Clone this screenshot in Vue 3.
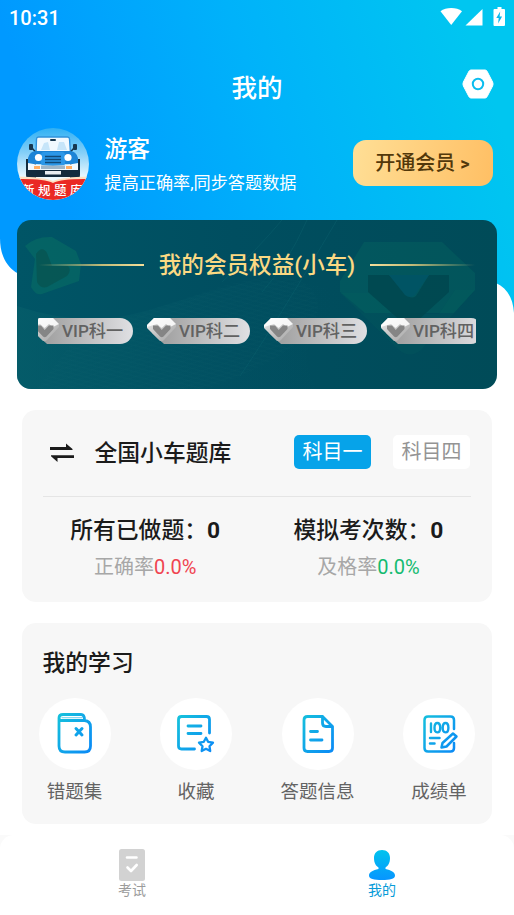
<script setup>
const chips = ['VIP科一', 'VIP科二', 'VIP科三', 'VIP科四']
const stats = [
  { title: '所有已做题：', count: 0, label: '正确率', value: '0.0%', tone: 'red' },
  { title: '模拟考次数：', count: 0, label: '及格率', value: '0.0%', tone: 'green' },
]
const tools = [
  { id: 'wrong', label: '错题集' },
  { id: 'fav', label: '收藏' },
  { id: 'info', label: '答题信息' },
  { id: 'score', label: '成绩单' },
]
</script>

<template>
  <div class="page" lang="zh-CN">
    <svg class="hero-bg" viewBox="0 0 514 320" aria-hidden="true">
      <defs>
        <linearGradient id="hero" gradientUnits="userSpaceOnUse" x1="60" y1="200" x2="480" y2="60">
          <stop offset="0" stop-color="#0099ff" />
          <stop offset=".5" stop-color="#00b2fa" />
          <stop offset="1" stop-color="#00c6f0" />
        </linearGradient>
      </defs>
      <path d="M0 0H514V313C513 298 507 288 496 283L470 278H38C15 278 0 264 0 238Z" fill="url(#hero)" />
    </svg>

    <header class="status">
      <span class="clock">10:31</span>
      <svg class="status-icons" viewBox="0 0 66 20">
        <path d="M.5 4.200C6-.2 16.500-.2 22 4.200L11.200 18z" fill="#fff" />
        <path d="M42.500 2V18.500H25.500z" fill="#fff" />
        <path d="M57.500 0h4v2H64q1 0 1 1v15q0 1-1 1H54.500q-1 0-1-1V3q0-1 1-1h3z" fill="#fff" />
        <path d="M60.200 4.500 56.300 11h2.400l-.6 5.500 4-7h-2.500z" fill="#08b8ee" />
      </svg>
    </header>

    <div class="titlebar">
      <h1>我的</h1>
      <svg class="settings" viewBox="0 0 32 30">
        <path d="M9 1H23Q24.200 1 25 2.200L30.600 13Q31.500 15 30.600 17L25 27.800Q24.200 29 23 29H9Q7.800 29 7 27.800L1.400 17Q.5 15 1.400 13L7 2.200Q7.800 1 9 1Z" fill="#fff" stroke="#fff" />
        <circle cx="16" cy="15" r="5.200" fill="none" stroke="#0bbdef" stroke-width="2" />
      </svg>
    </div>

    <section class="profile">
      <svg class="avatar" viewBox="0 0 72 72">
        <defs>
          <clipPath id="round"><circle cx="36" cy="36" r="36" /></clipPath>
          <linearGradient id="sky" x1="0" y1="0" x2="0" y2="1">
            <stop offset="0" stop-color="#2fb0f4" /><stop offset=".35" stop-color="#86d0f8" /><stop offset=".7" stop-color="#f0fbff" />
          </linearGradient>
        </defs>
        <g clip-path="url(#round)">
          <rect width="72" height="72" fill="url(#sky)" />
          <path d="M19 25 19.500 11Q19.700 9 21.500 9H50.500Q52.300 9 52.500 11L53.500 25z" fill="#f0f9ff" stroke="#2f92dc" stroke-width="1.400" />
          <path d="M24 22 27 15 31 14 33 22zM40 22 42 14 47 14 50 22z" fill="#c6e5f9" />
          <rect x="33" y="11" width="6" height="2" rx="1" fill="#17374f" />
          <rect x="12" y="16" width="4" height="6" rx="1" fill="#17374f" />
          <rect x="56" y="16" width="4" height="6" rx="1" fill="#17374f" />
          <path d="M15 20 19 24.500M57 20 53 24.500" stroke="#17374f" stroke-width="1.500" />
          <path d="M9 31H19V50H10Q9 49 9 47zM53 31H63V47Q63 49 62 50H53z" fill="#132c3e" />
          <path d="M11 30Q13 23 19 23H53Q59 23 61 30V36H11z" fill="#1c84d6" />
          <rect x="24" y="24" width="24" height="14" rx="3" fill="#2b97e8" />
          <path d="M28 28.500H44M28 31.500H44M28 34.500H44" stroke="#114a78" stroke-width="1.300" />
          <circle cx="21.500" cy="29.500" r="3.600" fill="#fff" /><circle cx="51" cy="29.500" r="3.600" fill="#fff" />
          <path d="M11 35Q23 38 36 38T61 35V42H11z" fill="#f0f9ff" />
          <path d="M17 38H23V41H17zM49 38H55V41H49z" fill="#ffad63" />
          <path d="M24 37.500H48V41H24z" fill="#9eb5c7" />
          <path d="M19 42H53V49H19z" fill="#142b3c" /><path d="M28 43H44V46.500H28z" fill="#e9edf0" />
          <path d="M0 48.500Q27 49 36 53Q45 49 72 48.500V72H0z" fill="#ffe0c2" />
          <path d="M0 51Q27 50.500 36 55Q45 50.500 72 51V72H0z" fill="#ea2924" />
          <text x="37" y="66.500" text-anchor="middle" class="avatar-text">新规题库</text>
        </g>
      </svg>
      <div class="who">
        <strong>游客</strong>
        <span>提高正确率,同步答题数据</span>
      </div>
      <button class="join">开通会员 <b>&gt;</b></button>
    </section>

    <section class="vip">
      <svg class="vip-art" viewBox="0 0 480 169" aria-hidden="true">
        <defs>
          <linearGradient id="waveFill" x1="0" y1="0" x2="1" y2="0">
            <stop offset="0" stop-color="#08606b" stop-opacity=".55" /><stop offset="1" stop-color="#035465" stop-opacity="0" />
          </linearGradient>
          <pattern id="mesh" width="8" height="5" patternUnits="userSpaceOnUse" patternTransform="rotate(-18)">
            <path d="M0 0H8M0 0 8 5" stroke="#23757c" stroke-width=".5" opacity=".3" fill="none" />
          </pattern>
        </defs>
        <path d="M0 86Q60 106 112 95C165 83 212 59 265 61C330 65 330 80 300 110Q280 135 300 169H0z" fill="url(#waveFill)" />
        <path d="M60 116Q130 90 212 64Q290 45 300 80Q310 125 190 169H20z" fill="url(#mesh)" opacity=".5" />
        <path d="M205 62Q240 30 265 0M245 72Q270 45 290 0M223 156Q258 105 320 0" fill="none" stroke="#0d6470" stroke-width="1" opacity=".4" />
        <g fill="#087264">
          <path d="M8 26Q19 16 35 17L59 31 64 44 62 61 25 74Q19 76 14 67L18 39z" opacity=".5" />
          <path d="M19 34Q25 25 30 33L35 46H51Q55 50 50 56L30 67Q23 69 20 62z" fill="#075451" opacity=".8" />
          <path d="M347 22H425L458 53V70L437 93H348L323 72V61z" opacity=".27" />
          <path d="M323 73H378L400 94H422L438 70H458L404 130Q393 139 382 130z" opacity=".12" />
          <path d="M351 55H372L391 76Q395 79 399 76L412 55H432V72L398 103Q392 106 386 103L351 72z" fill="#00474f" opacity=".85" />
          <path d="M372 55H412L398 75Q393 79 388 75z" fill="#005464" />
        </g>
      </svg>
      <div class="vip-title">
        <i class="rule left"></i>
        <h2>我的会员权益(小车)</h2>
        <i class="rule right"></i>
      </div>
      <div class="chips">
        <div v-for="chip in chips" :key="chip" class="chip">
          <svg viewBox="0 0 103 26">
            <defs>
              <linearGradient id="silver"><stop offset=".1" stop-color="#a0a0a0" /><stop offset="1" stop-color="#e0e0e3" /></linearGradient>
              <linearGradient id="gem" x1="0" y1="0" x2="1" y2="1"><stop offset="0" stop-color="#eee" /><stop offset=".5" stop-color="#c4c4c4" /><stop offset="1" stop-color="#a4a4a4" /></linearGradient>
            </defs>
            <path d="M8 0H90A13 13 0 0 1 90 26H17L5 15z" fill="url(#silver)" />
            <path d="M7 0H23L29 6V9L17 22Q14 25 11 21L0 10V7z" fill="url(#gem)" />
            <path d="M7 0H23L29 6 23 9 19 6 14.700 10 10 6 0 9V7z" fill="#fff" opacity=".85" />
            <path d="M6 7.500H11L14.700 12 19 7.500H23.500V11L16.500 18.500Q14.700 20 13 18.500L6 11z" fill="#858585" />
          </svg>
          <span>{{ chip }}</span>
        </div>
      </div>
    </section>

    <section class="panel bank">
      <div class="bank-head">
        <svg class="swap" viewBox="0 0 24 20">
          <path d="M0 4H16V.5L22.500 6V7H0zM24 12.200V15H7.500V19L1 13.200V12.200z" fill="#1b1b1b" />
        </svg>
        <h3>全国小车题库</h3>
        <div class="subjects">
          <button class="on">科目一</button>
          <button>科目四</button>
        </div>
      </div>
      <div class="stats">
        <div v-for="s in stats" :key="s.title" class="stat">
          <h3>{{ s.title }}<b>{{ s.count }}</b></h3>
          <p>{{ s.label }}<span :class="s.tone">{{ s.value }}</span></p>
        </div>
      </div>
    </section>

    <section class="panel study">
      <h3>我的学习</h3>
      <svg class="defs" aria-hidden="true">
        <defs>
          <linearGradient id="ink" gradientUnits="userSpaceOnUse" x1="18" y1="20" x2="54" y2="48">
            <stop offset="0" stop-color="#15c0dc" /><stop offset="1" stop-color="#0b8cf5" />
          </linearGradient>
        </defs>
      </svg>
      <div class="tools">
        <div v-for="t in tools" :key="t.id" class="tool">
          <div class="disc">
            <svg viewBox="0 0 72 72" fill="none" stroke="url(#ink)" stroke-width="2.800" stroke-linecap="round" stroke-linejoin="round">
              <template v-if="t.id === 'wrong'">
                <path d="M20 20V48Q20 54 26 54H45.500Q51.500 54 51.500 48V29Q51.500 23 45.500 22.500H22.500Q20 22.500 20 20Q20 16.500 24 16.500H42Q45.500 16.500 45.500 22" />
                <path d="M23 19.600H43" stroke-width="1.400" opacity=".5" />
                <path d="M37 30.500 43 37M43 30.500 37 37" stroke-width="3" />
              </template>
              <template v-else-if="t.id === 'fav'">
                <path d="M34.500 51H21.500Q18.500 51 18.500 48V21.500Q18.500 18.500 21.500 18.500H46.500Q49.500 18.500 49.500 21.500V35M28 28H41M28 35.500H41" />
                <path d="M46 39.800 48.100 43.800 53 44.600 49.500 48.200 50.200 53 46 50.800 41.700 53 42.500 48.200 39 44.600 43.800 43.800z" stroke-width="2.300" />
              </template>
              <template v-else-if="t.id === 'info'">
                <path d="M40.500 18.500H25.500Q22 18.500 22 22V50Q22 53.500 25.500 53.500H47Q50.500 53.500 50.500 50V28.500L40.500 18.500V25Q40.500 28.500 44 28.500H50M28.500 33.500H35.500M28.500 42H40" />
              </template>
              <template v-else>
                <path d="M51 31V22Q51 18.500 47.500 18.500H25Q21.500 18.500 21.500 22V50Q21.500 53.500 25 53.500H47.500Q51 53.500 51 50V45M27 40H36.500M27 45.500H31.500" stroke-width="2.500" />
                <path d="M28 25.500V34M34.300 25Q37.200 25 37.200 29.700T34.300 34.400 31.500 29.700 34.300 25ZM42.500 25Q45.400 25 45.400 29.700T42.500 34.400 39.700 29.700 42.500 25Z" stroke-width="2.400" />
                <path d="M38.500 49.500 39.500 45 50 35.500 53.500 38.500 43.500 48.500z" stroke-width="2.500" />
              </template>
            </svg>
          </div>
          <span>{{ t.label }}</span>
        </div>
      </div>
    </section>

    <div class="footer">
      <nav class="tabbar">
        <div class="tab">
          <svg viewBox="0 0 28 32">
            <rect x="1" width="26" height="32" rx="2.500" fill="#d2d2d2" />
            <path d="M9 8.500H18.500M9.500 18.500 13 22 18.700 16" fill="none" stroke="#fff" stroke-width="2.600" stroke-linecap="round" stroke-linejoin="round" />
          </svg>
          <span>考试</span>
        </div>
        <div class="tab active">
          <svg viewBox="0 0 28 32">
            <defs>
              <linearGradient id="person" gradientUnits="userSpaceOnUse" x1="0" y1="1" x2="0" y2="31"><stop offset="0" stop-color="#00c3ee" /><stop offset="1" stop-color="#0795ff" /></linearGradient>
            </defs>
            <path d="M14 1C19 1 22 4 22 9C22 14 20 17 17.500 18.500V20C23 21 27 23.300 27 26.500C27 30 22 31 14 31S1 30 1 26.500C1 23.300 5 21 10.500 20V18.500C8 17 6 14 6 9C6 4 9 1 14 1Z" fill="url(#person)" />
          </svg>
          <span>我的</span>
        </div>
      </nav>
    </div>
  </div>
</template>

<style>
body { margin: 0; background: #fff; }
</style>

<style scoped>
* { box-sizing: border-box; }
h1, h2, h3, p { margin: 0; font-weight: 500; }
button { border: 0; padding: 0; font-family: inherit; }
svg { display: block; }
.page {
  position: relative; width: 514px; height: 915px; overflow: hidden;
  display: flex; flex-direction: column; background: #fff; color: #1b1b1b;
  font-family: Roboto, "Noto Sans CJK SC", sans-serif;
}
.hero-bg { position: absolute; left: 0; top: 0; width: 514px; height: 320px; }
.hero-bg ~ * { position: relative; }
.status { height: 36px; padding: 0 8px 0 9px; display: flex; align-items: center; justify-content: space-between; color: #fff; }
.clock { font-size: 20px; line-height: 36px; font-weight: 500; }
.status-icons { width: 66px; height: 20px; margin-bottom: 2px; }
.titlebar { height: 92px; display: grid; grid-template-columns: 1fr auto 1fr; color: #fff; }
h1 { grid-column: 2; font-size: 25.500px; line-height: 36px; padding-top: 34px; }
.settings { width: 32px; height: 30px; justify-self: end; margin: 33px 20px 0 0; }
.profile { height: 92px; padding: 0 21px 20px 17px; display: flex; align-items: center; color: #fff; }
.avatar { width: 72px; height: 72px; }
.avatar-text { font-size: 12.500px; font-weight: 500; fill: #fff; letter-spacing: 3.500px; }
.who { margin-left: 15.500px; padding-top: 3px; flex: 1; display: flex; flex-direction: column; }
.who strong { font-size: 22.800px; line-height: 34px; font-weight: 500; }
.who span { font-size: 17.150px; line-height: 32px; }
.join { width: 140px; height: 46px; border-radius: 13px; margin-top: -2px; padding: 1px 1px 0 0; background: linear-gradient(100deg, #ffdf96, #ffbf64); color: #52380a; font-size: 20px; line-height: 45px; font-weight: 500; }
.join b { font-size: 18px; }
.vip { height: 169px; margin: 0 17px; border-radius: 14px; background: linear-gradient(90deg, #005566, #004e60 45%, #004b58); overflow: hidden; padding: 28px 21px 0; display: flex; flex-direction: column; gap: 36px; }
.vip-art { position: absolute; inset: 0; width: 480px; height: 169px; }
.vip-title { position: relative; height: 34px; display: flex; align-items: center; justify-content: center; gap: 15px; }
.vip-title h2 { flex: none; font-size: 22.600px; line-height: 34px; padding-top: 1px; color: #fbd983; white-space: nowrap; }
.rule { flex: 0 0 105px; height: 2px; }
.left { background: linear-gradient(90deg, transparent, #c3bb78 60%, #f5df9b); }
.right { background: linear-gradient(270deg, transparent, #c3bb78 60%, #f5df9b); }
.chips { position: relative; height: 26px; display: flex; gap: 14px; overflow: hidden; justify-content: flex-start; border-radius: 2px; }
.chip { flex: 0 0 103px; height: 26px; display: grid; }
.chip:first-child { margin-left: -8px; }
.chip > * { grid-area: 1 / 1; }
.chip svg { width: 103px; height: 26px; }
.chip span { padding-left: 32px; font-size: 17.150px; line-height: 26px; font-weight: 500; color: #626262; white-space: nowrap; }
.panel { margin: 21px 21.500px 0; width: 470.500px; background: #f7f7f7; border-radius: 14px; }
.bank { height: 192px; padding: 0 21px; }
.bank-head { height: 87px; display: flex; align-items: center; border-bottom: 1px solid #e5e5e5; }
.swap { width: 24px; height: 20px; margin: 0 21px 0 7px; }
h3 { font-size: 22.800px; line-height: 34px; padding-top: 1px; }
.subjects { display: flex; gap: 22px; margin: -2px 1px 0 auto; }
.subjects button { width: 77px; height: 34px; border-radius: 5px; background: #fff; color: #949494; font-size: 20px; line-height: 35px; }
.subjects .on { background: #06a3e9; color: #fff; }
.stats { display: flex; padding: 16px 0 0; margin: 0 -9px; }
.stat { flex: 1; text-align: center; }
.stat b { font-weight: 700; }
.stat p { font-size: 20px; line-height: 30px; margin-top: 4px; color: #a7a7a7; font-weight: 400; }
.red { color: #f04450; }
.green { color: #15bb71; }
.study { height: 201px; padding: 22px 17px 0; }
.study h3 { padding: 2px 0 0 4px; }
.defs { position: absolute; width: 0; height: 0; }
.tools { display: flex; justify-content: space-between; margin-top: 17px; }
.tool { width: 72px; display: flex; flex-direction: column; align-items: center; }
.disc { width: 72px; height: 72px; border-radius: 50%; background: #fff; }
.disc svg { width: 72px; height: 72px; }
.tool span { margin-top: 8px; font-size: 18.500px; line-height: 28px; white-space: nowrap; color: #636363; }
.footer { margin-top: 11px; height: 80px; background: #fafafa; }
.tabbar { height: 80px; border-radius: 14px 14px 0 0; background: #fff; display: grid; grid-template-columns: 1fr 1fr; padding: 14px 7px 0; }
.tab { display: flex; flex-direction: column; align-items: center; font-size: 14px; line-height: 18px; color: #9b9b9b; }
.tab svg { width: 28px; height: 32px; }
.active { color: #079bd8; }
</style>
